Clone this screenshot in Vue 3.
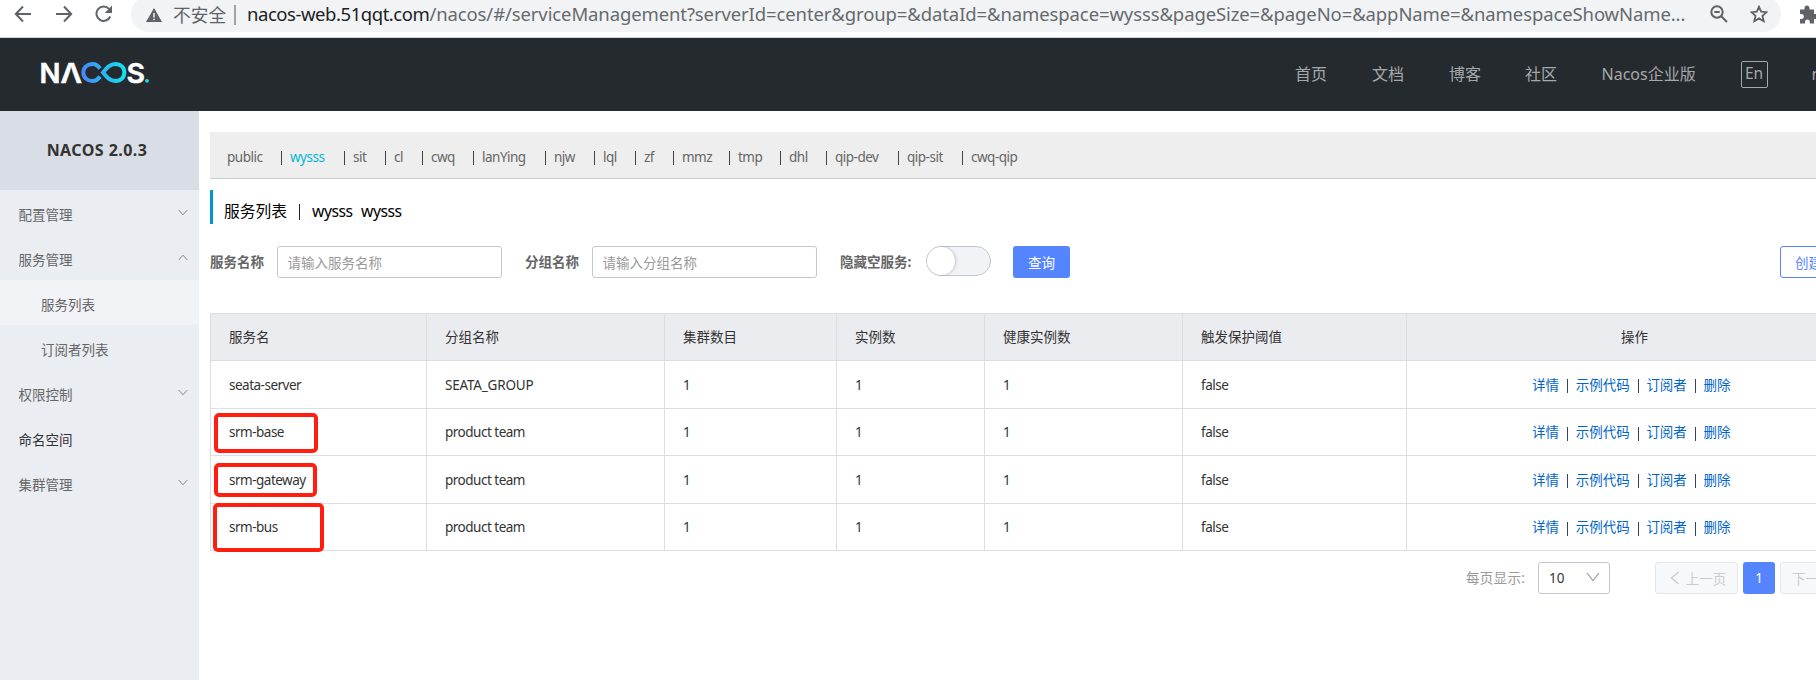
<script setup>
const nav = [
  { label: '首页', cls: 'n1' },
  { label: '文档', cls: 'n2' },
  { label: '博客', cls: 'n3' },
  { label: '社区', cls: 'n4' },
  { label: 'Nacos企业版', cls: 'n5' },
]
const menu = [
  { label: '配置管理', arrow: 'down' },
  { label: '服务管理', arrow: 'up' },
  { label: '服务列表', sub: true, active: true },
  { label: '订阅者列表', sub: true },
  { label: '权限控制', arrow: 'down' },
  { label: '命名空间', leaf: true },
  { label: '集群管理', arrow: 'down' },
]
const namespaces = ['public', 'wysss', 'sit', 'cl', 'cwq', 'lanYing', 'njw', 'lql', 'zf', 'mmz', 'tmp', 'dhl', 'qip-dev', 'qip-sit', 'cwq-qip']
const columns = ['服务名', '分组名称', '集群数目', '实例数', '健康实例数', '触发保护阈值']
const services = [
  { name: 'seata-server', group: 'SEATA_GROUP' },
  { name: 'srm-base', group: 'product team', mark: 'm-base' },
  { name: 'srm-gateway', group: 'product team', mark: 'm-gateway' },
  { name: 'srm-bus', group: 'product team', mark: 'm-bus' },
]
const actions = ['详情', '示例代码', '订阅者', '删除']
</script>

<template>
  <div class="page">
    <div class="browser">
      <svg class="ic back" viewBox="0 0 18 18"><path d="M17 9H2M9 1.5L1.8 9L9 16.500" /></svg>
      <svg class="ic fwd" viewBox="0 0 18 18"><path d="M1 9H16M9 1.500L16.200 9L9 16.500" /></svg>
      <svg class="ic reload" viewBox="0 0 18 18"><path d="M15.300 11.500A7.200 7.200 0 1 1 14 3.800" /><path class="solid" d="M17 0.500V8H9.700Z" /></svg>
      <div class="omnibox">
        <svg class="warn" viewBox="0 0 16 14"><path d="M8 0L16 14H0Z" fill="#5f6368" /><path d="M8 5V9.500M8 10.800V12.300" stroke="#f1f3f4" stroke-width="1.500" /></svg>
        <span class="insecure">不安全</span>
        <span class="sep"></span>
        <span class="url"><b>nacos-web.51qqt.com</b><span>/nacos/#/serviceManagement?serverId=center&amp;group=&amp;dataId=&amp;namespace=wysss&amp;pageSize=&amp;pageNo=&amp;appName=&amp;namespaceShowName...</span></span>
        <svg class="ic mag" viewBox="0 0 18 18"><circle cx="7" cy="7" r="5.700" /><path d="M11.200 11.200L17 17M4.300 7H9.700" /></svg>
        <svg class="ic star" viewBox="0 0 18 18"><path d="M9 1.800L11.200 6.700L16.500 7.200L12.500 10.800L13.700 16.200L9 13.400L4.300 16.200L5.500 10.800L1.500 7.200L6.800 6.700Z" /></svg>
      </div>
      <svg class="puzzle" viewBox="0 0 20 20"><path d="M2 5.500H6.500V4A2.500 2.500 0 0 1 11.500 4V5.500H16V10H17.500A2.500 2.500 0 0 1 17.500 15H16V19.500H11.800V18A2.300 2.300 0 0 0 7 18V19.500H2V15H3.300A2.300 2.300 0 0 0 3.300 10H2Z" fill="#5f6368" /></svg>
    </div>

    <header class="topbar">
      <svg class="logo" viewBox="0 0 110 24">
        <defs>
          <linearGradient id="loop" x1="0" x2="1"><stop offset="0" stop-color="#4788fb" /><stop offset="1" stop-color="#12e2ee" /></linearGradient>
        </defs>
        <text x="-1.500" y="21.500" textLength="21" lengthAdjust="spacingAndGlyphs">N</text>
        <text x="19.500" y="21.500" textLength="21.500" lengthAdjust="spacingAndGlyphs">Λ</text>
        <path d="M59 7.500C57 4.600 55 3 51.500 3C46.300 3 42.300 6.500 42.300 11.500S46.300 20 51.500 20C55 20 57 18.400 59 15.500M62 11.500C66 6.500 69 3 74.500 3C79.800 3 83.300 6.500 83.300 11.500S79.800 20 74.500 20C69 20 66 16.500 62 11.500Z" fill="none" stroke="url(#loop)" stroke-width="4" />
        <text x="85.500" y="21.500" textLength="18.500" lengthAdjust="spacingAndGlyphs">S</text>
        <circle cx="106" cy="19.800" r="1.900" fill="#12e2ee" />
      </svg>
      <nav>
        <a v-for="n in nav" :key="n.label" :class="n.cls">{{ n.label }}</a>
        <span class="lang">En</span>
        <a class="user">nacos</a>
      </nav>
    </header>

    <div class="body">
      <aside>
        <h1>NACOS 2.0.3</h1>
        <div v-for="m in menu" :key="m.label" class="item" :class="{ sub: m.sub, active: m.active, leaf: m.leaf }">
          <span>{{ m.label }}</span>
          <svg v-if="m.arrow" viewBox="0 0 10 7"><path :d="m.arrow === 'up' ? 'M0.700 6L5 1.200L9.300 6' : 'M0.700 1L5 5.800L9.300 1'" /></svg>
        </div>
      </aside>

      <main>
        <div class="tabs">
          <span v-for="(n, i) in namespaces" :key="n" class="tab" :class="{ on: n === 'wysss' }"><i v-if="i"></i><span>{{ n }}</span></span>
        </div>
        <h2><span class="cn">服务列表</span><i></i><span class="ns">wysss</span><span class="ns">wysss</span></h2>
        <div class="search">
          <label>服务名称</label>
          <div class="input">请输入服务名称</div>
          <label>分组名称</label>
          <div class="input">请输入分组名称</div>
          <label class="hide">隐藏空服务:</label>
          <div class="switch"><i></i></div>
          <button class="query">查询</button>
          <button class="create">创建服务</button>
        </div>
        <div class="table">
          <div class="row head">
            <div v-for="c in columns" :key="c" class="cell">{{ c }}</div>
            <div class="cell ops">操作</div>
          </div>
          <div v-for="s in services" :key="s.name" class="row">
            <div class="cell"><span>{{ s.name }}</span><em v-if="s.mark" class="mark" :class="s.mark"></em></div>
            <div class="cell" :class="{ caps: s.name === 'seata-server' }">{{ s.group }}</div>
            <div class="cell">1</div>
            <div class="cell">1</div>
            <div class="cell">1</div>
            <div class="cell">false</div>
            <div class="cell ops links">
              <template v-for="(a, i) in actions" :key="a"><i v-if="i"></i><a>{{ a }}</a></template>
            </div>
          </div>
        </div>
        <div class="pager">
          <span class="per">每页显示:</span>
          <div class="select"><span>10</span><svg viewBox="0 0 14 10"><path d="M1 1L7 8.500L13 1" /></svg></div>
          <button class="prev"><svg viewBox="0 0 10 14"><path d="M8.500 1L1.500 7L8.500 13" /></svg>上一页</button>
          <button class="cur">1</button>
          <button class="next">下一页</button>
        </div>
      </main>
    </div>
  </div>
</template>

<style>
body { margin: 0; overflow: hidden; }
</style>

<style scoped>
* { box-sizing: border-box; }
.page { width: 1816px; height: 680px; overflow: hidden; background: #fff; font-family: "Noto Sans", "Noto Sans CJK SC", sans-serif; font-size: 13.5px; color: #333; display: flex; flex-direction: column; white-space: nowrap; }
i, em { font-style: normal; }
button { font: inherit; padding: 0; border-radius: 3px; }

.browser { flex: none; height: 38px; border-bottom: 1px solid #d5d7da; display: flex; align-items: flex-start; }
.ic { flex: none; width: 18px; height: 18px; fill: none; stroke: #5f6368; stroke-width: 2; }
.ic .solid { fill: #5f6368; stroke: none; }
.back { margin: 5px 0 0 14px; }
.fwd { margin: 5px 0 0 23px; }
.reload { margin: 5px 0 0 22px; }
.omnibox { flex: none; width: 1650px; height: 36px; margin: -4px 0 0 18px; border-radius: 18px; background: #f1f3f4; display: flex; align-items: center; padding-left: 15px; }
.warn { flex: none; width: 16px; height: 14px; margin-top: 2px; }
.insecure { flex: none; width: 53px; margin-left: 11px; font-size: 17.7px; line-height: 30px; color: #5f6368; margin-top: 1px; }
.sep { flex: none; width: 2px; height: 20px; margin: 1px 0 0 8px; background: #a2a5a8; }
.url { flex: none; width: 1438px; margin-left: 11px; font-size: 18.5px; line-height: 30px; letter-spacing: -0.11px; color: #666a6e; }
.url b { font-weight: 400; color: #202124; letter-spacing: -0.45px; }
.mag { margin-left: 25px; }
.star { margin-left: 22px; stroke-width: 1.8; }
.puzzle { flex: none; width: 20px; height: 20px; margin: 4px 0 0 17px; }

.topbar { flex: none; height: 73px; background: #252a2f; display: flex; }
.logo { flex: none; width: 110px; height: 24px; margin: 23px 0 0 41px; overflow: visible; }
.logo text { font: 600 27.500px Inter, sans-serif; fill: #fff; stroke: #fff; stroke-width: .5; }
nav { display: flex; align-items: flex-start; margin-left: 1144px; padding-top: 23px; font-size: 16px; line-height: 26px; color: #a6a8aa; }
nav a { flex: none; width: 77px; }
nav .n3 { width: 76px; }
nav .n4 { width: 76.500px; }
nav .n5 { width: 139px; }
.lang { flex: none; width: 27px; height: 27px; border: 1px solid #a6a8aa; border-radius: 2px; text-align: center; line-height: 23px; font-size: 15.5px; }
nav .user { margin-left: 44px; }

.body { flex: 1; display: flex; min-height: 0; }
aside { flex: none; width: 199px; background: #eaedf2; }
h1 { margin: 0; height: 79px; background: #d9dde5; font-size: 16px; line-height: 79px; text-align: center; padding-right: 5px; letter-spacing: 0.450px; }
.item { height: 45px; padding: 2px 11px 0 18.500px; display: flex; align-items: center; justify-content: space-between; color: #666; line-height: 41px; }
.item span { padding-top: 3px; }
.item.sub { padding-left: 41px; }
.item.active { background: #f2f3f7; }
.item.leaf { color: #333; }
.item svg { width: 10px; height: 7px; margin-top: -3px; fill: none; stroke: #888; stroke-width: 1; }

main { flex: none; width: 1652px; margin-left: 11px; padding-top: 21px; }
.tabs { height: 47px; background: #eee; border-bottom: 1px solid #ccc; display: grid; grid-template-columns: 70px 63px 41px 37px 51px 72px 49px 41px 38px 56px 51px 46px 72px 64px 100px; font-size: 13.5px; letter-spacing: -0.5px; line-height: 48px; color: #666; }
.tab { display: flex; align-items: center; }
.tab > span { padding-top: 1px; }
.tab:first-child { padding-left: 17px; }
.tab i { width: 1px; height: 14px; margin: 3px 8px 0 1px; background: #444; }
.tab.on > span { color: #00b7d8; }
h2 { margin: 11px 0 0; height: 34px; border-left: 3px solid #0098cb; padding-left: 11px; display: flex; align-items: center; font-size: 15.75px; line-height: 34px; font-weight: 400; color: #000; }
h2 .cn { width: 63px; margin-top: 8px; }
h2 i { width: 1px; height: 16px; margin: 9px 12px 0 12px; background: #222; }
h2 .ns { width: 49px; margin-top: 8px; letter-spacing: -0.5px; }
.search { margin-top: 22px; height: 32px; display: flex; }
.search > * { flex: none; }
label { width: 67px; font-weight: 700; color: #666; line-height: 32px; }
.input { width: 225px; height: 32px; border: 1px solid #c4c6cf; border-radius: 3px; padding-left: 9.500px; line-height: 32px; color: #999; margin-right: 23px; }
label.hide { width: 86px; }
.switch { width: 65px; height: 30px; border: 1px solid #c4c6cf; border-radius: 15px; background: #f2f3f7; }
.switch i { display: block; width: 28px; height: 28px; border-radius: 50%; background: #fff; box-shadow: 1px 0 3px rgba(0, 0, 0, .2); }
.query { width: 57px; margin-left: 22px; border: 0; background: #5584ff; color: #fff; }
.create { width: 84px; margin-left: 710px; border: 1px solid #5584ff; background: #fff; color: #5584ff; }

.table { margin-top: 35px; border-bottom: 1px solid #dcdee3; }
.row { display: grid; grid-template-columns: 216px 238px 172px 148px 198px 224px 456px; height: 48px; line-height: 48px; letter-spacing: -0.5px; }
.row:nth-child(odd) { height: 47px; line-height: 47px; }
.head { background: #ebecf0; }
.row.head { letter-spacing: 0; }
.cell { position: relative; border-left: 1px solid #dcdee3; border-top: 1px solid #dcdee3; padding-left: 18px; }
.caps { letter-spacing: -0.2px; }
.ops { padding: 0; text-align: center; letter-spacing: 0; }
.links { display: flex; align-items: center; padding-left: 125px; color: #06c; }
.links i { width: 1px; height: 14px; margin: 2px 7.700px 0 8px; background: #346; }
.mark { position: absolute; border: 4px solid #ff1e10; border-radius: 5px; }
.m-base { left: 3px; top: 4px; width: 104px; height: 40px; }
.m-gateway { left: 3px; top: 7px; width: 103px; height: 34px; }
.m-bus { left: 2px; top: -1px; width: 111px; height: 49px; }

.pager { margin-top: 11px; display: flex; height: 32px; line-height: 32px; padding-left: 1256px; }
.pager > * { flex: none; }
.per { width: 72px; color: #999; letter-spacing: 0.3px; }
.select { width: 72px; border: 1px solid #c4c6cf; border-radius: 3px; padding: 0 9px 0 10px; line-height: 31px; display: flex; justify-content: space-between; align-items: center; }
.select svg { width: 14px; height: 10px; margin-top: -3px; fill: none; stroke: #999; stroke-width: 1.200; }
.prev, .next { width: 83px; margin-left: 45px; border: 1px solid #e6e7eb; background: #f7f8fa; color: #ccc; }
.prev svg { width: 10px; height: 14px; margin: 0 6px -1px 3px; fill: none; stroke: #ccc; stroke-width: 1.400; }
.cur { width: 32px; margin: 0 5px; border: 0; background: #5584ff; color: #fff; }
.next { margin: 0; padding-left: 11px; text-align: left; }
</style>
